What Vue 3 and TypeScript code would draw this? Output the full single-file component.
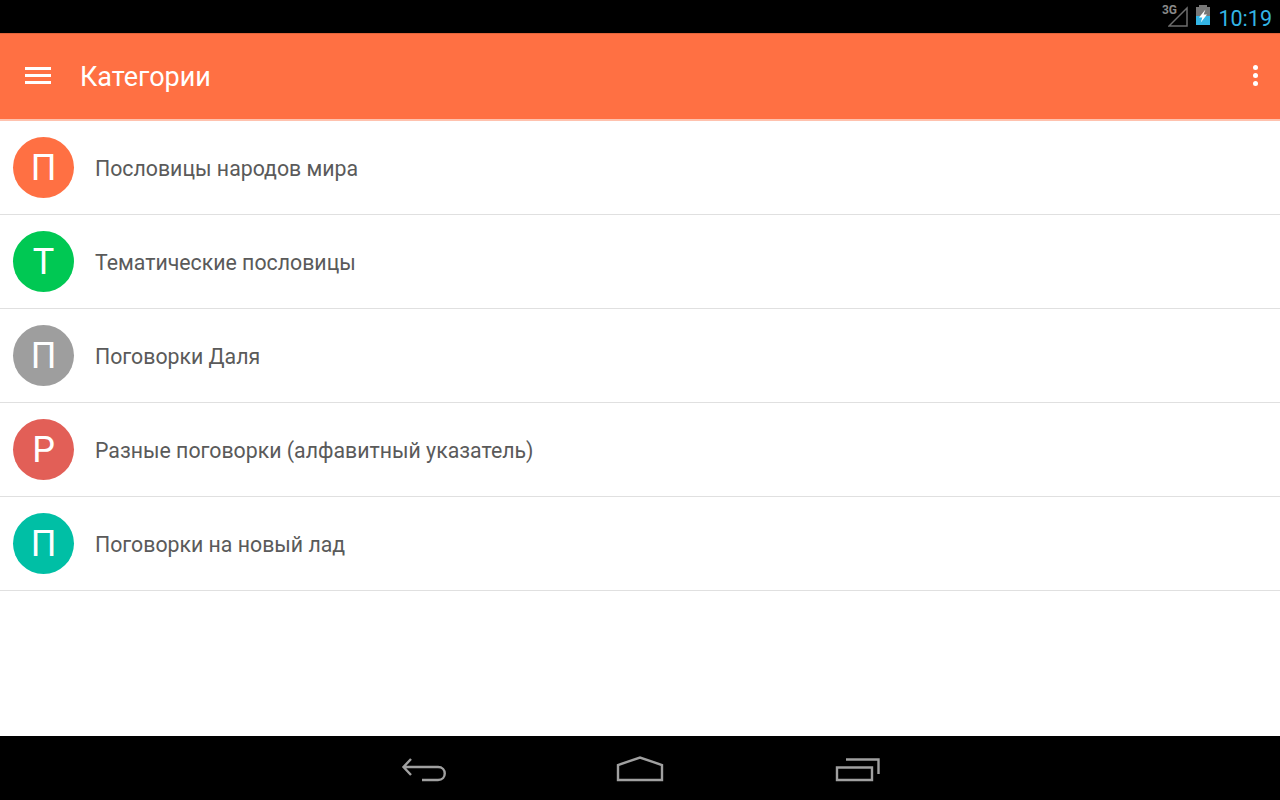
<script setup lang="ts">
interface Category {
  letter: string;
  title: string;
  color: string;
}

const categories: Category[] = [
  { letter: 'П', title: 'Пословицы народов мира', color: '#ff7043' },
  { letter: 'Т', title: 'Тематические пословицы', color: '#00c853' },
  { letter: 'П', title: 'Поговорки Даля', color: '#9e9e9e' },
  { letter: 'Р', title: 'Разные поговорки (алфавитный указатель)', color: '#e25f57' },
  { letter: 'П', title: 'Поговорки на новый лад', color: '#00bfa5' },
];
</script>

<template>
  <div class="screen">
    <div class="status-bar">
      <span class="net">3G</span>
      <svg class="signal" width="20" height="22" viewBox="0 0 20 22">
        <path d="M1 21H19V3Z" fill="none" stroke="#6e6e6e" stroke-width="1.5" />
      </svg>
      <svg class="battery" width="14" height="20" viewBox="0 0 14 20">
        <rect x="3" y="0" width="8" height="2" fill="#777" />
        <rect x="0" y="2" width="14" height="9" fill="#777" />
        <rect x="0" y="11" width="14" height="9" fill="#33b5e5" />
        <path d="M9.5 4.5 3 12.5H6.3L4.8 17.5 11 9.5H7.6Z" fill="#fff" />
      </svg>
      <span class="clock">10:19</span>
    </div>

    <header class="toolbar">
      <div class="burger"><i></i><i></i><i></i></div>
      <h1 class="title">Категории</h1>
      <div class="overflow"><i></i><i></i><i></i></div>
    </header>

    <main class="content">
      <div v-for="(item, index) in categories" :key="index" class="row">
        <div class="avatar" :style="{ backgroundColor: item.color }">{{ item.letter }}</div>
        <span class="row-title">{{ item.title }}</span>
      </div>
    </main>

    <nav class="nav-bar">
      <svg width="48" height="28" viewBox="0 0 48 28">
        <path d="M11 5 3.5 13 11 21M4 13H38C47 13 47 26 38 26H22" fill="none" stroke="#a0a0a0" stroke-width="2.4" />
      </svg>
      <svg width="48" height="28" viewBox="0 0 48 28">
        <path d="M2 26V11L24 3.5 46 11V26Z" fill="none" stroke="#a0a0a0" stroke-width="2.4" />
      </svg>
      <svg width="48" height="28" viewBox="0 0 48 28">
        <path d="M5 13.5H40V26H5ZM14 5.5H46.5V20" fill="none" stroke="#a0a0a0" stroke-width="2.4" />
      </svg>
    </nav>
  </div>
</template>

<style>
html,
body {
  margin: 0;
  background: #fff;
}
</style>

<style scoped>
.screen {
  width: 1280px;
  height: 800px;
  display: flex;
  flex-direction: column;
  overflow: hidden;
  font-family: Roboto, "Noto Sans", sans-serif;
  background: #fff;
}

.status-bar {
  height: 33px;
  background: #000;
  display: flex;
  align-items: center;
  justify-content: flex-end;
  padding-right: 8px;
  position: relative;
  flex: none;
}

.signal {
  align-self: flex-start;
  margin-top: 5px;
  margin-right: 8px;
}

.net {
  position: absolute;
  right: 103px;
  top: 4px;
  font-size: 12px;
  line-height: 12px;
  font-weight: 700;
  color: #8a8a8a;
}

.battery {
  align-self: flex-start;
  margin-top: 5px;
  margin-right: 8px;
}

.clock {
  font-size: 21.5px;
  font-weight: 400;
  color: #33b5e5;
  line-height: 33px;
  padding-top: 3px;
}

.toolbar {
  height: 88px;
  box-sizing: border-box;
  background: #ff7043;
  border-top: 1px solid #e0633a;
  border-bottom: 2px solid #ffc2ae;
  display: flex;
  align-items: center;
  padding: 0 22px 2px 25px;
  flex: none;
}

.burger {
  width: 26px;
  display: flex;
  flex-direction: column;
  gap: 4px;
}

.burger i {
  display: block;
  height: 3px;
  background: #fff;
}

.title {
  margin: 0 0 0 29px;
  padding-top: 2px;
  font-size: 27px;
  font-weight: 400;
  color: #fff;
  flex: 1;
}

.overflow {
  display: flex;
  flex-direction: column;
  gap: 3px;
}

.overflow i {
  display: block;
  width: 5px;
  height: 5px;
  border-radius: 50%;
  background: #fff;
}

.content {
  flex: 1;
}

.row {
  height: 94px;
  box-sizing: border-box;
  border-bottom: 1px solid #e0e0e0;
  display: flex;
  align-items: center;
  padding-left: 13px;
}

.avatar {
  width: 61px;
  height: 61px;
  border-radius: 50%;
  color: #fff;
  font-size: 36px;
  display: flex;
  align-items: center;
  justify-content: center;
  flex: none;
}

.row-title {
  margin-left: 21px;
  padding-top: 2px;
  font-size: 21.3px;
  color: #5a5a5a;
}

.nav-bar {
  height: 64px;
  background: #000;
  display: flex;
  align-items: center;
  justify-content: center;
  gap: 168px;
  flex: none;
}
</style>
